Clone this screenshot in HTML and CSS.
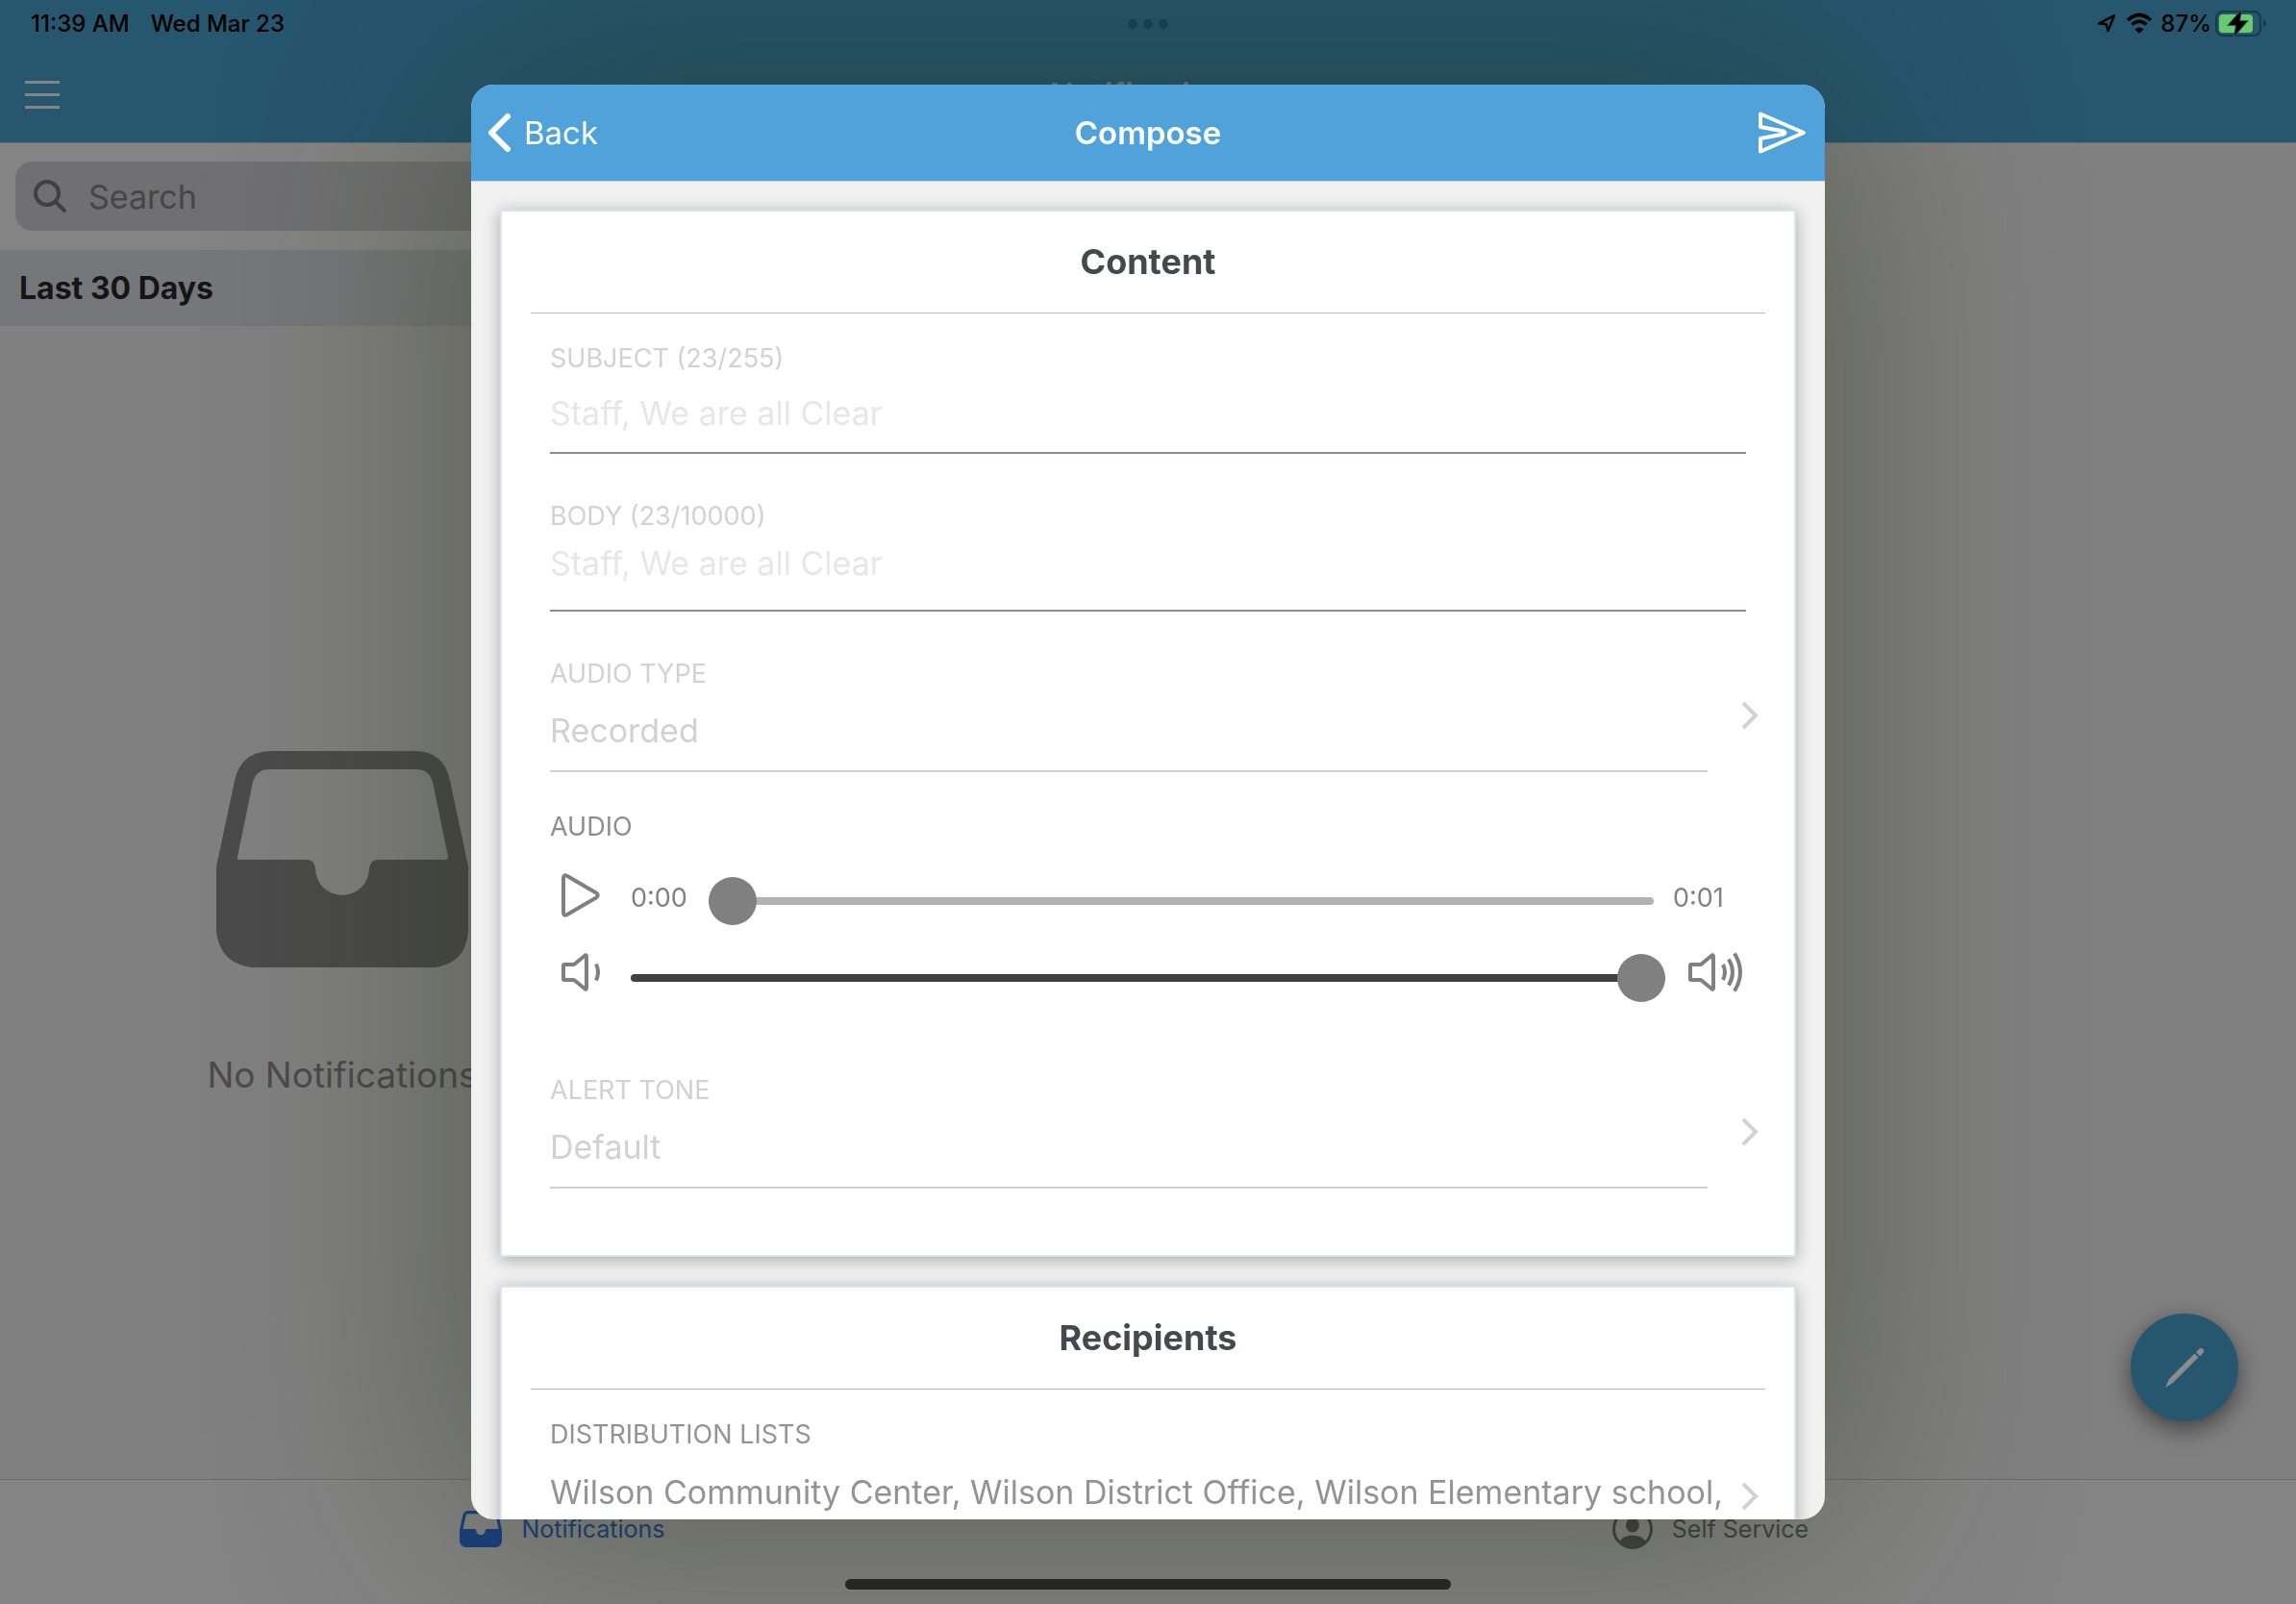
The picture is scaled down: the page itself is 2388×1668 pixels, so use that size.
FILE: index.html
```html
<!DOCTYPE html>
<html lang="en">
	<head>
		<meta charset="utf-8">
		<title>Compose</title>
		<link rel="stylesheet" href="styles.css">
	</head>
	<body>
		<svg class="defs" aria-hidden="true">
			<symbol id="tray" viewBox="0 0 262 225">
				<path fill-rule="evenodd" d="M0 120L19 31Q26 0 57 0H206Q237 0 243 31L262 120V188Q259 221 227 225H37Q4 221 0 188ZM22 110L38 32Q42 19 55 19H208Q221 19 225 32L241 110Q241 113 238 113H169Q160 113 159 122A28 28 0 0 1 103 122Q102 113 94 113H24Q21 113 22 110Z"/>
			</symbol>
			<symbol id="arrow" viewBox="0 0 18 30">
				<path d="M2 2L15 15L2 28" fill="none" stroke="currentColor" stroke-width="4"/>
			</symbol>
		</svg>
		<div class="app">
			<header class="topbar">
				<div class="status">
					<span class="clock">11:39 AM</span>
					<span class="date">Wed Mar 23</span>
					<span class="dots"><i></i><i></i><i></i></span>
					<svg class="locate" viewBox="0 0 20 20"><path d="M2 10.500L18 2L11.500 18L9.500 11Z" fill="none" stroke="#000" stroke-width="2.400" stroke-linejoin="round"/></svg>
					<svg class="wifi" viewBox="0 0 28 22">
						<path d="M2 8Q14 -3 26 8M6.500 12.500Q14 6 21.500 12.500" fill="none" stroke="#000" stroke-width="3.600"/>
						<path d="M14 22L9.500 17.500Q14 13.500 18.500 17.500Z"/>
					</svg>
					<span class="percent">87%</span>
					<svg class="battery" viewBox="0 0 54 28">
						<rect x="1" y="2" width="46" height="25" rx="7" fill="none" stroke="#193a4d" stroke-width="2"/>
						<rect x="4" y="5" width="35" height="19" rx="4" fill="#67cb6b"/>
						<path d="M50 10Q53 11 53 14Q53 17 50 18Z" fill="#193a4d"/>
						<path d="M27 1L14 16H22L20 27L33 12H25Z" stroke="#27566f" stroke-width="2" paint-order="stroke"/>
					</svg>
				</div>
				<div class="titlebar">
					<button class="menu" aria-label="Menu"><i></i><i></i><i></i></button>
					<h1>Notifications</h1>
				</div>
			</header>
			<main class="panes">
				<section class="list">
					<div class="searchbar">
						<label class="searchbox">
							<svg viewBox="0 0 34 34"><circle cx="14" cy="14" r="12" /><path d="M22.500 22.500L32 32"/></svg>
							<input type="search" placeholder="Search" aria-label="Search">
						</label>
					</div>
					<h2 class="group">Last 30 Days</h2>
					<div class="empty">
						<svg><use href="#tray"/></svg>
						<p>No Notifications</p>
					</div>
				</section>
				<section class="detail"></section>
			</main>
			<nav class="tabs">
				<a class="ac" href="#"><svg class="tray"><use href="#tray"/></svg>Notifications</a>
				<a href="#">
					<svg class="person" viewBox="0 0 42 42">
						<circle cx="21" cy="21" r="19.500" fill="none" stroke="currentColor" stroke-width="3"/>
						<ellipse cx="21" cy="17" rx="7" ry="7.500"/>
						<path d="M7 34Q12 27.500 21 27.500T35 34Q29 41 21 41T7 34Z"/>
					</svg>Self Service</a>
			</nav>
			<button class="fab" aria-label="Compose">
				<svg viewBox="0 0 42 42"><path d="M1 42L5 33L31.500 6.500L35.500 10.500L9 37ZM33 5L35.500 2.500Q38 0 40.500 2Q42 4 40 6.500L37 9.500Z"/></svg>
			</button>
			<div class="home"></div>
		</div>

		<div class="overlay">
			<div class="modal" role="dialog" aria-label="Compose">
				<header class="modalbar">
					<button class="back">
						<svg viewBox="0 0 26 42"><path d="M20 4L3 21L20 38"/></svg>Back
					</button>
					<h2>Compose</h2>
					<button class="send" aria-label="Send">
						<svg viewBox="0 0 52 44"><path d="M3 2.500L48 22L3 41.500V28L27 23.500Q30 22 27 20.500L3 16Z"/></svg>
					</button>
				</header>
				<div class="scroll">
					<section class="card">
						<h3>Content</h3>
						<div class="fields">
							<div class="field off">
								<label for="subject">SUBJECT (23/255)</label>
								<input id="subject" type="text" value="Staff, We are all Clear" disabled>
							</div>
							<div class="field off">
								<label for="body">BODY (23/10000)</label>
								<textarea id="body" disabled>Staff, We are all Clear</textarea>
							</div>
							<div class="field off pick">
								<div class="main">
									<label for="type">AUDIO TYPE</label>
									<select id="type" disabled><option>Recorded</option></select>
								</div>
								<svg class="arrow"><use href="#arrow"/></svg>
							</div>
							<div class="audio">
								<h4>AUDIO</h4>
								<div class="row">
									<button class="play" aria-label="Play">
										<svg viewBox="0 0 40 46"><path d="M2 5Q2 1 6 3L36 20.500Q39.500 23 36 25.500L6 43Q2 45 2 41Z"/></svg>
									</button>
									<span class="now">0:00</span>
									<input class="seek" type="range" min="0" max="100" value="0" aria-label="Position">
									<span class="total">0:01</span>
								</div>
								<div class="row volume">
									<svg class="low" viewBox="0 0 40 42"><path d="M2 14Q2 13 3 13H13L24 4Q26 2 26 5V37Q26 40 24 38L13 29H3Q2 29 2 28ZM36 12.500Q40 21 36 29.500"/></svg>
									<input class="level" type="range" min="0" max="100" value="100" aria-label="Volume">
									<svg class="high" viewBox="0 0 56 42"><path d="M2 14Q2 13 3 13H13L24 4Q26 2 26 5V37Q26 40 24 38L13 29H3Q2 29 2 28ZM36 13Q40 21 36 29M42 7.500Q50 21 42 34.500M48 1.500Q60 21 48 40.500"/></svg>
								</div>
							</div>
							<div class="field off pick">
								<div class="main">
									<label for="tone">ALERT TONE</label>
									<select id="tone" disabled><option>Default</option></select>
								</div>
								<svg class="arrow"><use href="#arrow"/></svg>
							</div>
						</div>
					</section>
					<section class="card">
						<h3>Recipients</h3>
						<div class="fields">
							<div class="field pick lists">
								<div class="main">
									<label for="lists">DISTRIBUTION LISTS</label>
									<button id="lists">Wilson Community Center, Wilson District Office, Wilson Elementary school,</button>
								</div>
								<svg class="arrow"><use href="#arrow"/></svg>
							</div>
						</div>
					</section>
				</div>
			</div>
		</div>
	</body>
</html>
```

FILE: styles.css
```css
* {margin:0; padding:0; box-sizing:border-box; }
html,body{height:100%; overflow:hidden; }
body,button,input,select,textarea{
	font-family: Inter, "Liberation Sans", sans-serif;
	font-size: 34px;
	font-weight: 400;
}
button,input,select,textarea{
	border: 0;
	background: none;
	color: inherit;
	appearance: none;
	outline: none;
	opacity: 1;
}
svg{display:block; flex:none; }
.defs{position:absolute; width:0; height:0; }

/* page behind the dialog */
.app{
	height: 100%;
	display: flex;
	flex-direction: column;
	background: #808080;
	position: relative;
}
.topbar{
	height: 149px;
	background: #27566f;
	border-bottom: 1px solid #6b7072;
}
.status{
	height: 48px;
	padding: 0 30px 0 32px;
	display: flex;
	align-items: center;
	font-size: 24px;
	font-weight: 500;
	color: #000;
	position: relative;
}
.date{margin-left:22px; margin-right:auto; }
.dots{
	position: absolute;
	left: 50%;
	top: 20px;
	margin-left: -21px;
	display: flex;
	gap: 6px;
}
.dots i{width:10px; height:10px; border-radius:50%; background:#17425c; }
.locate{width:20px; height:20px; margin-right:10px; }
.wifi{width:28px; height:22px; margin-right:8px; }
.battery{width:54px; height:28px; margin-left:4px; }
.titlebar{
	height: 100px;
	display: flex;
	align-items: center;
	justify-content: center;
	color: #7c7a76;
	position: relative;
}
.titlebar h1{font-size:33px; font-weight:600; }
.menu{
	position: absolute;
	left: 26px;
	display: grid;
	gap: 10px;
}
.menu i{width:36px; height:3px; background:#858585; }
.panes{flex:1; display:flex; }
.list{
	width: 712px;
	display: flex;
	flex-direction: column;
}
.detail{flex:1; }
.searchbar{padding:19px 16px 20px; background:#848484; }
.searchbox{
	height: 72px;
	padding: 0 19px;
	display: flex;
	align-items: center;
	gap: 23px;
	border-radius: 18px;
	background: #707072;
}
.searchbox svg{width:34px; height:34px; fill:none; stroke:#404040; stroke-width:4; stroke-linecap:round; }
.searchbox input{flex:1; font-size:34px; }
.searchbox input::placeholder{color:#464648; }
.group{
	height: 79px;
	line-height: 79px;
	padding-left: 20px;
	font-size: 32px;
	font-weight: 700;
	color: #151515;
	background: #76777a;
}
.empty{
	flex: 1;
	padding-top: 46px;
	display: flex;
	flex-direction: column;
	align-items: center;
	justify-content: center;
	gap: 88px;
	font-size: 37px;
	line-height: 48px;
	color: #4b4b4b;
}
.empty svg{width:262px; height:225px; fill:#4b4b4b; }
.tabs{
	height: 130px;
	display: flex;
	background: #848484;
	border-top: 1px solid #6c6c6c;
}
.tabs a{
	flex: 1;
	height: 102px;
	padding-right: 24px;
	display: flex;
	align-items: center;
	justify-content: center;
	gap: 20px;
	font-size: 25px;
	text-decoration: none;
	color: #42433f;
	fill: currentColor;
}
.tabs .ac{color:#18407f; }
.tray{width:44px; height:38px; }
.person{width:42px; height:42px; }
.fab{
	position: absolute;
	right: 60px;
	bottom: 190px;
	width: 112px;
	height: 112px;
	display: grid;
	place-items: center;
	border-radius: 50%;
	background: #27566f;
	box-shadow: 0 8px 24px rgba(0,0,0,0.5);
}
.fab svg{width:42px; height:42px; fill:#8b8b8b; }
.home{
	position: absolute;
	left: 50%;
	bottom: 15px;
	width: 630px;
	height: 11px;
	margin-left: -315px;
	border-radius: 6px;
	background: #262626;
	z-index: 6;
}

/* dialog */
.overlay{
	position: fixed;
	inset: 0;
	display: flex;
	justify-content: center;
	padding: 88px 40px;
}
.modal{
	width: 1408px;
	border-radius: 24px;
	overflow: hidden;
	display: flex;
	flex-direction: column;
	background: #f1f1f1;
	box-shadow: 0 0 280px rgba(32,41,9,0.44);
}
.modalbar{
	flex: none;
	height: 101px;
	padding: 0 18px;
	display: grid;
	grid-template-columns: 1fr auto 1fr;
	align-items: center;
	color: #fff;
	background: #4fa3da;
	border-bottom: 1px solid #d5d5d8;
}
.modalbar h2{font-size:33px; font-weight:600; }
.back{display:flex; align-items:center; gap:11px; font-size:33px; }
.back svg{width:26px; height:42px; fill:none; stroke:#fff; stroke-width:6; stroke-linecap:round; stroke-linejoin:round; }
.send{justify-self:end; }
.send svg{width:52px; height:44px; fill:none; stroke:#fff; stroke-width:4; stroke-linejoin:round; }
.scroll{
	flex: 1;
	min-height: 0;
	padding: 29px 30px;
	overflow: hidden;
}
.card{
	margin-bottom: 30px;
	background: #fff;
	border: 2px solid #dfe3ea;
	box-shadow: 0 3px 16px rgba(0,0,0,0.3);
}
.card h3{
	height: 106px;
	line-height: 105px;
	margin: 0 30px;
	text-align: center;
	font-size: 36px;
	font-weight: 700;
	color: #45484d;
	border-bottom: 1px solid #b8b8b8;
}
.fields{padding:31px 50px 69px; }
.field{display:block; color:#939393; }
.field+.field{margin-top:49px; }
.field label,.audio h4{
	display: block;
	font-size: 27px;
	font-weight: 400;
	line-height: 32px;
}
.off label{color:#d1d1d6; }
.off input,.off textarea{
	display: block;
	width: 100%;
	height: 83px;
	border-bottom: 2px solid #868e99;
	font-size: 34px;
	line-height: 44px;
	color: #e7e7e8;
}
.off textarea{padding-top:11px; resize:none; }
.pick{
	display: flex;
	align-items: center;
	gap: 35px;
	margin-right: -13px;
}
.main{flex:1; min-width:0; }
.main select,.main button{
	display: block;
	width: 100%;
	height: 86px;
	font-size: 34px;
	text-align: left;
	white-space: nowrap;
}
.main select{color:#d1d1d6; border-bottom:2px solid #d1d1d6; }
.arrow{width:18px; height:30px; color:#d1d1d6; }
.audio{margin:41px 4px 67px 0; color:#808080; }
.audio h4{margin-bottom:15px; color:#8e8e8e; }
.row{
	height: 80px;
	padding-left: 12px;
	display: flex;
	align-items: center;
}
.row svg{fill:none; stroke:#808080; stroke-width:4; stroke-linejoin:round; }
.play{margin-right:32px; }
.play svg{width:40px; height:46px; }
.row span{font-size:27px; line-height:32px; padding-top:6px; }
.now{width:81px; }
.total{width:92px; padding-left:20px; }
.volume{gap:24px; }
.low{width:40px; height:42px; margin-right:8px; }
.high{width:56px; height:42px; }
.row input{
	flex: 1;
	min-width: 0;
	height: 50px;
	margin-top: 12px;
}
.row input::-webkit-slider-runnable-track{height:8px; border-radius:4px; background:#b2b2b2; }
.row .level::-webkit-slider-runnable-track{background:#404040; }
.row input::-webkit-slider-thumb{
	appearance: none;
	width: 50px;
	height: 50px;
	margin-top: -21px;
	border-radius: 50%;
	background: #808080;
}
.lists{min-height:160px; gap:24px; }
.lists .main{align-self:flex-start; }
```
